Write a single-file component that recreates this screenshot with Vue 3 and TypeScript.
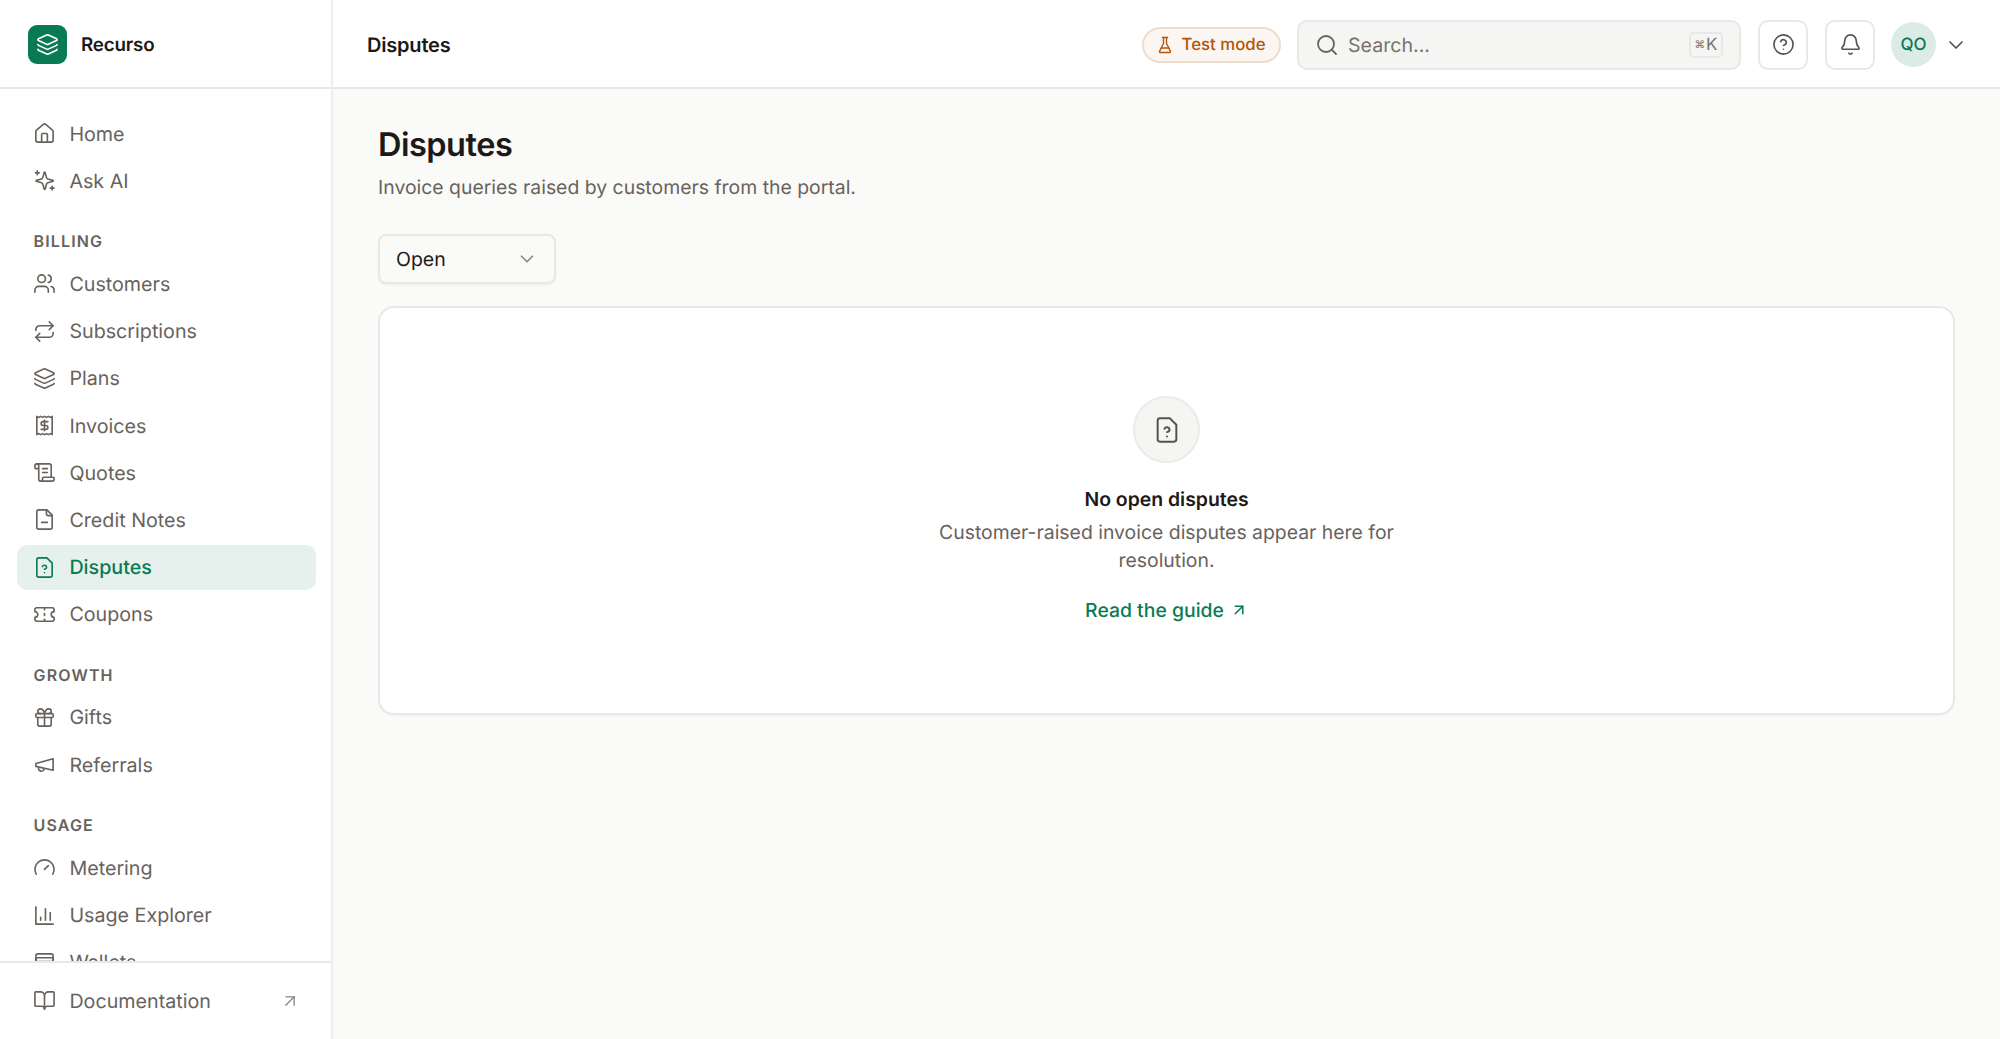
<script setup lang="ts">
// lucide style icons, each one a list of path strings on a 24 box
const icons: Record<string, string[]> = {
  home: ['M15 21v-8a1 1 0 0 0-1-1h-4a1 1 0 0 0-1 1v8', 'M3 10a2 2 0 0 1 .709-1.528l7-5.999a2 2 0 0 1 2.582 0l7 5.999A2 2 0 0 1 21 10v9a2 2 0 0 1-2 2H5a2 2 0 0 1-2-2z'],
  sparkles: ['M10.2 15.7a2 2 0 0 0-1.4-1.4l-5.4-1.5a.5.5 0 0 1 0-.9l5.4-1.5a2 2 0 0 0 1.4-1.4l1.5-5.4a.5.5 0 0 1 .9 0l1.5 5.4a2 2 0 0 0 1.4 1.4l5.4 1.5a.5.5 0 0 1 0 .9l-5.4 1.5a2 2 0 0 0-1.4 1.4l-1.5 5.4a.5.5 0 0 1-.9 0z', 'M4.5 2v4', 'M2.5 4h4', 'M20 18v4', 'M18 20h4'],
  users: ['M16 21v-2a4 4 0 0 0-4-4H6a4 4 0 0 0-4 4v2', 'M5 7a4 4 0 1 0 8 0a4 4 0 1 0-8 0', 'M22 21v-2a4 4 0 0 0-3-3.87', 'M16 3.13a4 4 0 0 1 0 7.75'],
  repeat: ['m17 2 4 4-4 4', 'M3 11v-1a4 4 0 0 1 4-4h14', 'm7 22-4-4 4-4', 'M21 13v1a4 4 0 0 1-4 4H3'],
  layers: ['M12.83 2.18a2 2 0 0 0-1.66 0L2.6 6.08a1 1 0 0 0 0 1.83l8.58 3.91a2 2 0 0 0 1.66 0l8.58-3.9a1 1 0 0 0 0-1.83z', 'M2 12a1 1 0 0 0 .58.91l8.6 3.91a2 2 0 0 0 1.65 0l8.58-3.9A1 1 0 0 0 22 12', 'M2 17a1 1 0 0 0 .58.91l8.6 3.91a2 2 0 0 0 1.65 0l8.58-3.9A1 1 0 0 0 22 17'],
  receipt: ['M4 2.5v19l2-1 2 1 2-1 2 1 2-1 2 1 2-1 2 1v-19l-2 1-2-1-2 1-2-1-2 1-2-1-2 1z', 'M15.5 8h-5a1.9 1.9 0 1 0 0 4h3a1.9 1.9 0 1 1 0 4h-5', 'M12 17.5v-11'],
  scroll: ['M15 12h-5', 'M15 8h-5', 'M19 17V5a2 2 0 0 0-2-2H4', 'M8 21h12a2 2 0 0 0 2-2v-1a1 1 0 0 0-1-1H11a1 1 0 0 0-1 1v1a2 2 0 1 1-4 0V5a2 2 0 1 0-4 0v2a1 1 0 0 0 1 1h3'],
  fileMinus: ['M14.5 2H6a2 2 0 0 0-2 2v16a2 2 0 0 0 2 2h12a2 2 0 0 0 2-2V7.5z', 'M14 2v4a2 2 0 0 0 2 2h4', 'M9 15h6'],
  fileQuestion: ['M14.5 2H6a2 2 0 0 0-2 2v16a2 2 0 0 0 2 2h12a2 2 0 0 0 2-2V7.5z', 'M9.8 11a2.3 2.3 0 0 1 4.4.7c0 1.5-2.2 2.1-2.2 2.1', 'M12 17.5h.01'],
  ticket: ['M2 9a3 3 0 0 1 0 6v2a2 2 0 0 0 2 2h16a2 2 0 0 0 2-2v-2a3 3 0 0 1 0-6V7a2 2 0 0 0-2-2H4a2 2 0 0 0-2 2Z', 'M12 5v2', 'M12 11v2', 'M12 17v2'],
  gift: ['M4 8h16a1 1 0 0 1 1 1v2a1 1 0 0 1-1 1H4a1 1 0 0 1-1-1V9a1 1 0 0 1 1-1z', 'M12 8v13', 'M19 12v7a2 2 0 0 1-2 2H7a2 2 0 0 1-2-2v-7', 'M7.5 8a2.5 2.5 0 0 1 0-5A4.8 8 0 0 1 12 8a4.8 8 0 0 1 4.5-5 2.5 2.5 0 0 1 0 5'],
  megaphone: ['m3 11 18-5v12L3 14v-3z', 'M11.6 16.8a3 3 0 1 1-5.8-1.6'],
  gauge: ['m12 14 4-4', 'M3.34 19a10 10 0 1 1 17.32 0'],
  chart: ['M3 3v18h18', 'M18 17V9', 'M13 17V5', 'M8 17v-3'],
  wallet: ['M5 3h14a2 2 0 0 1 2 2v14a2 2 0 0 1-2 2H5a2 2 0 0 1-2-2V5a2 2 0 0 1 2-2z', 'M3 9a2 2 0 0 1 2-2h14a2 2 0 0 1 2 2', 'M3 11h18'],
  book: ['M12 7v14', 'M3 18a1 1 0 0 1-1-1V4a1 1 0 0 1 1-1h5a4 4 0 0 1 4 4 4 4 0 0 1 4-4h5a1 1 0 0 1 1 1v13a1 1 0 0 1-1 1h-6a3 3 0 0 0-3 3 3 3 0 0 0-3-3z'],
  arrow: ['M7 7h10v10', 'M7 17 17 7'],
  flask: ['M10 2v7.527a2 2 0 0 1-.211.896L4.72 20.55a1 1 0 0 0 .9 1.45h12.76a1 1 0 0 0 .9-1.45l-5.069-10.127A2 2 0 0 1 14 9.527V2', 'M8.5 2h7', 'M7 16h10'],
  search: ['M3 11a8 8 0 1 0 16 0a8 8 0 1 0-16 0', 'm21 21-4.3-4.3'],
  help: ['M2 12a10 10 0 1 0 20 0a10 10 0 1 0-20 0', 'M9.09 9a3 3 0 0 1 5.83 1c0 2-3 3-3 3', 'M12 17h.01'],
  bell: ['M10.268 21a2 2 0 0 0 3.464 0', 'M3.262 15.326A1 1 0 0 0 4 17h16a1 1 0 0 0 .74-1.673C19.41 13.956 18 12.499 18 8A6 6 0 0 0 6 8c0 4.499-1.411 5.956-2.738 7.326'],
  chevron: ['m6 9 6 6 6-6'],
}

interface NavItem {
  label: string
  icon: string
  active?: boolean
}

interface NavGroup {
  title?: string
  items: NavItem[]
}

const groups: NavGroup[] = [
  { items: [{ label: 'Home', icon: 'home' }, { label: 'Ask AI', icon: 'sparkles' }] },
  {
    title: 'BILLING',
    items: [
      { label: 'Customers', icon: 'users' },
      { label: 'Subscriptions', icon: 'repeat' },
      { label: 'Plans', icon: 'layers' },
      { label: 'Invoices', icon: 'receipt' },
      { label: 'Quotes', icon: 'scroll' },
      { label: 'Credit Notes', icon: 'fileMinus' },
      { label: 'Disputes', icon: 'fileQuestion', active: true },
      { label: 'Coupons', icon: 'ticket' },
    ],
  },
  { title: 'GROWTH', items: [{ label: 'Gifts', icon: 'gift' }, { label: 'Referrals', icon: 'megaphone' }] },
  {
    title: 'USAGE',
    items: [
      { label: 'Metering', icon: 'gauge' },
      { label: 'Usage Explorer', icon: 'chart' },
      { label: 'Wallets', icon: 'wallet' },
    ],
  },
]
</script>

<template>
  <div class="app">
    <aside class="sidebar">
      <div class="brand">
        <span class="logo">
          <svg class="ic-logo" viewBox="0 0 24 24"><path v-for="d in icons.layers" :key="d" :d="d" /></svg>
        </span>
        <span class="brand-name">Recurso</span>
      </div>
      <nav class="nav">
        <div v-for="(g, i) in groups" :key="i" class="group">
          <div v-if="g.title" class="group-title">{{ g.title }}</div>
          <a v-for="item in g.items" :key="item.label" class="nav-item" :class="{ active: item.active }">
            <svg class="ic" viewBox="0 0 24 24"><path v-for="d in icons[item.icon]" :key="d" :d="d" /></svg>
            <span>{{ item.label }}</span>
          </a>
        </div>
      </nav>
      <div class="side-foot">
        <a class="nav-item">
          <svg class="ic" viewBox="0 0 24 24"><path v-for="d in icons.book" :key="d" :d="d" /></svg>
          <span>Documentation</span>
          <svg class="ic-ext" viewBox="0 0 24 24"><path v-for="d in icons.arrow" :key="d" :d="d" /></svg>
        </a>
      </div>
    </aside>

    <div class="right">
      <header class="topbar">
        <div class="crumb">Disputes</div>
        <div class="test-pill">
          <svg class="ic-flask" viewBox="0 0 24 24"><path v-for="d in icons.flask" :key="d" :d="d" /></svg>
          Test mode
        </div>
        <div class="search">
          <svg class="ic-search" viewBox="0 0 24 24"><path v-for="d in icons.search" :key="d" :d="d" /></svg>
          <span class="search-text">Search...</span>
          <kbd class="kbd"><span class="cmd">⌘</span>K</kbd>
        </div>
        <button class="icon-btn">
          <svg class="ic" viewBox="0 0 24 24"><path v-for="d in icons.help" :key="d" :d="d" /></svg>
        </button>
        <button class="icon-btn">
          <svg class="ic" viewBox="0 0 24 24"><path v-for="d in icons.bell" :key="d" :d="d" /></svg>
        </button>
        <div class="user">
          <span class="avatar">QO</span>
          <svg class="ic-user" viewBox="0 0 24 24"><path v-for="d in icons.chevron" :key="d" :d="d" /></svg>
        </div>
      </header>

      <main class="main">
        <h1 class="title">Disputes</h1>
        <p class="subtitle">Invoice queries raised by customers from the portal.</p>
        <div class="select">
          <span>Open</span>
          <svg class="ic-select" viewBox="0 0 24 24"><path v-for="d in icons.chevron" :key="d" :d="d" /></svg>
        </div>
        <section class="card">
          <div class="empty-icon">
            <svg class="ic-empty" viewBox="0 0 24 24"><path v-for="d in icons.fileQuestion" :key="d" :d="d" /></svg>
          </div>
          <div class="empty-title">No open disputes</div>
          <p class="empty-desc">Customer-raised invoice disputes appear here for resolution.</p>
          <a class="guide">
            Read the guide
            <svg class="ic-guide" viewBox="0 0 24 24"><path v-for="d in icons.arrow" :key="d" :d="d" /></svg>
          </a>
        </section>
      </main>
    </div>
  </div>
</template>

<style>
html,
body {
  margin: 0;
  background: #fafaf8;
}
</style>

<style scoped>
.app {
  display: flex;
  height: 100vh;
  overflow: hidden;
  font-family: Inter, "Liberation Sans", sans-serif;
  text-rendering: geometricPrecision;
  color: #1c1917;
  background: #fafaf8;
}

svg {
  fill: none;
  stroke: currentColor;
  stroke-linecap: round;
  stroke-linejoin: round;
  flex: none;
}

/* sidebar */
.sidebar {
  width: 333px;
  flex: none;
  display: flex;
  flex-direction: column;
  box-sizing: border-box;
  background: #fff;
  border-right: 2px solid #efeeec;
}

.brand {
  height: 89px;
  flex: none;
  box-sizing: border-box;
  display: flex;
  align-items: center;
  gap: 14px;
  padding: 2px 0 0 28px;
  border-bottom: 2px solid #e9e8e6;
}

.logo {
  width: 39px;
  height: 39px;
  border-radius: 9px;
  background: #0a7a55;
  color: #fff;
  display: flex;
  align-items: center;
  justify-content: center;
}

.ic-logo {
  width: 23px;
  height: 23px;
  stroke-width: 1.7;
}

.brand-name {
  font-size: 18.8px;
  font-weight: 600;
  letter-spacing: -0.2px;
}

.nav {
  flex: 1;
  min-height: 0;
  overflow: hidden;
  padding: 22px 15px 0 17px;
}

.group {
  display: flex;
  flex-direction: column;
  gap: 2px;
  margin-bottom: 28px;
}

.group-title {
  height: 20px;
  line-height: 20px;
  font-size: 16px;
  font-weight: 600;
  letter-spacing: 1.15px;
  color: #68625c;
  padding-left: 16.5px;
  margin-bottom: 8px;
}

.nav-item {
  height: 45.2px;
  flex: none;
  box-sizing: border-box;
  display: flex;
  align-items: center;
  gap: 13.4px;
  padding: 0 16px;
  border-radius: 10px;
  font-size: 19.7px;
  font-weight: 400;
  color: #68625c;
}

.nav-item.active {
  background: #e6f1ed;
  color: #0a7a55;
  font-weight: 500;
}

.ic {
  width: 23px;
  height: 23px;
  stroke-width: 1.7;
}

.side-foot {
  flex: none;
  height: 78px;
  box-sizing: border-box;
  padding: 15px 15px 0 17px;
  border-top: 2px solid #e9e8e6;
}

.ic-ext {
  width: 20px;
  height: 20px;
  stroke-width: 1.6;
  margin-left: auto;
  color: #8a847e;
}

/* topbar */
.right {
  flex: 1;
  min-width: 0;
  display: flex;
  flex-direction: column;
}

.topbar {
  height: 89px;
  flex: none;
  box-sizing: border-box;
  display: flex;
  align-items: center;
  padding: 2px 32px 0 34px;
  background: #fff;
  border-bottom: 2px solid #e9e8e6;
}

.crumb {
  font-size: 20px;
  font-weight: 600;
  letter-spacing: -0.2px;
  margin-right: auto;
}

.test-pill {
  height: 36px;
  box-sizing: border-box;
  display: flex;
  align-items: center;
  gap: 8px;
  padding: 0 13.5px 0 11.7px;
  border: 2px solid #f0dccc;
  border-radius: 18px;
  background: #fbf6f1;
  color: #b4540a;
  font-size: 16.8px;
  font-weight: 500;
  margin-right: 16px;
}

.ic-flask {
  width: 18px;
  height: 18px;
  stroke-width: 1.8;
}

.search {
  width: 444px;
  height: 50px;
  box-sizing: border-box;
  display: flex;
  align-items: center;
  padding: 0 16px;
  background: #f5f5f4;
  border: 2px solid #e9e8e6;
  border-radius: 10px;
  margin-right: 17px;
}

.ic-search {
  width: 24px;
  height: 24px;
  stroke-width: 1.8;
  color: #68625c;
}

.search-text {
  margin-left: 9px;
  font-size: 19.6px;
  color: #78716c;
}

.kbd {
  margin-left: auto;
  height: 26px;
  width: 34px;
  box-sizing: border-box;
  display: flex;
  align-items: center;
  justify-content: center;
  gap: 1px;
  border: 2px solid #e9e8e6;
  border-radius: 5px;
  font-family: Inter, "DejaVu Sans", sans-serif;
  font-size: 17px;
  color: #78716c;
}

.cmd {
  font-size: 10.5px;
}

.icon-btn {
  width: 50px;
  height: 50px;
  box-sizing: border-box;
  display: flex;
  align-items: center;
  justify-content: center;
  padding: 0;
  background: #fff;
  border: 2px solid #e9e8e6;
  border-radius: 10px;
  color: #57514c;
  margin-right: 17px;
}

.icon-btn:last-of-type {
  margin-right: 16px;
}

.user {
  display: flex;
  align-items: center;
  gap: 8px;
}

.avatar {
  width: 45px;
  height: 45px;
  border-radius: 50%;
  background: #dcebe5;
  color: #0a7a55;
  font-size: 17px;
  font-weight: 500;
  display: flex;
  align-items: center;
  justify-content: center;
}

.ic-user {
  width: 24px;
  height: 24px;
  stroke-width: 1.7;
  color: #57514c;
}

/* main */
.main {
  flex: 1;
  min-height: 0;
  padding: 0 45px;
  background: #fafaf8;
}

.title {
  margin: 36px 0 0;
  font-size: 32.5px;
  line-height: 40px;
  font-weight: 600;
  letter-spacing: -0.5px;
  color: #1c1917;
}

.subtitle {
  margin: 8px 0 0;
  font-size: 19.4px;
  line-height: 28px;
  color: #68625c;
}

.select {
  margin-top: 33px;
  width: 178px;
  height: 50px;
  box-sizing: border-box;
  display: flex;
  align-items: center;
  justify-content: space-between;
  padding: 0 16px;
  border: 2px solid #e9e8e6;
  border-radius: 8px;
  background: #fafaf8;
  box-shadow: 0 1px 2px rgba(0, 0, 0, 0.05);
  font-size: 19.5px;
  color: #1c1917;
}

.ic-select {
  width: 22px;
  height: 22px;
  stroke-width: 1.8;
  color: #8a847e;
}

.card {
  margin-top: 22px;
  height: 409px;
  box-sizing: border-box;
  display: flex;
  flex-direction: column;
  align-items: center;
  padding-top: 88px;
  background: #fff;
  border: 2px solid #e9e8e6;
  border-radius: 16px;
  box-shadow: 0 1px 2px rgba(0, 0, 0, 0.04);
}

.empty-icon {
  width: 67px;
  height: 67px;
  box-sizing: border-box;
  display: flex;
  align-items: center;
  justify-content: center;
  border: 2px solid #ecebe9;
  border-radius: 50%;
  background: #f5f5f4;
  color: #57514c;
}

.ic-empty {
  width: 28px;
  height: 28px;
  stroke-width: 1.7;
}

.empty-title {
  margin-top: 22px;
  font-size: 19.4px;
  line-height: 28px;
  font-weight: 600;
}

.empty-desc {
  margin: 5px 0 0;
  width: 480px;
  text-align: center;
  font-size: 19.4px;
  line-height: 28px;
  color: #68625c;
}

.guide {
  margin-top: 22px;
  display: flex;
  align-items: center;
  gap: 6px;
  font-size: 19.4px;
  line-height: 28px;
  font-weight: 500;
  color: #0a7a55;
}

.ic-guide {
  width: 18px;
  height: 18px;
  stroke-width: 2;
}
</style>
